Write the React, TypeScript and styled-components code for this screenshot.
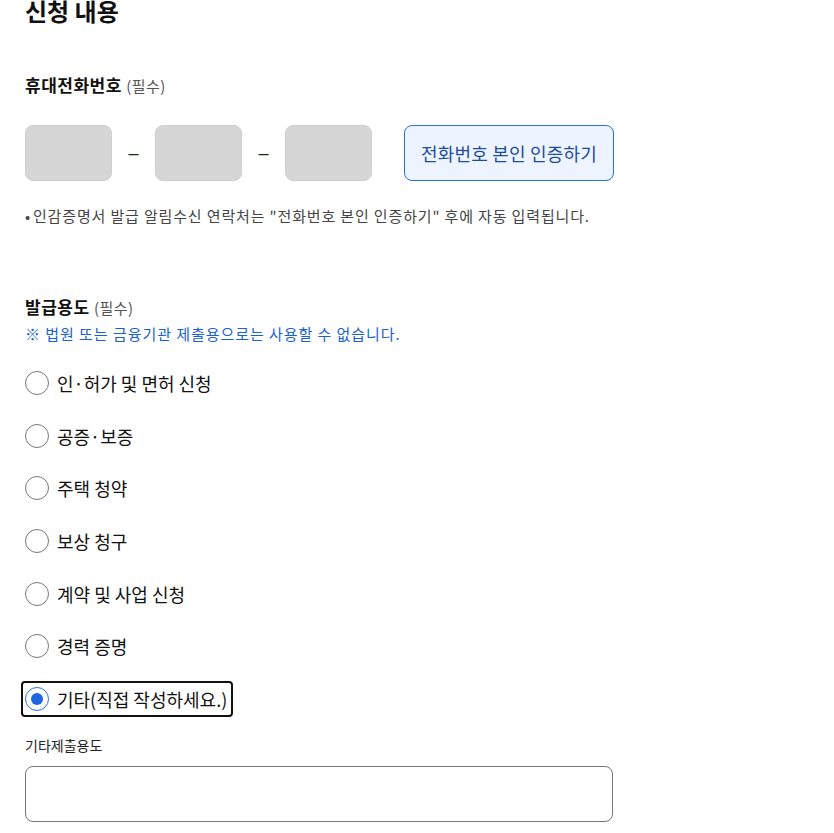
import styled, { createGlobalStyle } from "styled-components";

const GlobalStyle = createGlobalStyle`
  * { box-sizing: border-box; }
  body {
    margin: 0;
    background: #ffffff;
    font-family: "Noto Sans CJK KR", "Noto Sans", sans-serif;
    color: #111;
  }
`;

const purposes = [
  "인·허가 및 면허 신청",
  "공증·보증",
  "주택 청약",
  "보상 청구",
  "계약 및 사업 신청",
  "경력 증명",
  "기타(직접 작성하세요.)",
];

const Page = styled.div`
  padding: 0 25px;
  width: 613px;
  box-sizing: content-box;
`;

const Title = styled.h2`
  margin: -6px 0 0;
  font-size: 24px;
  font-weight: 700;
  line-height: 34px;
  color: #111;
`;

const Label = styled.h3<{ $top: number }>`
  margin: ${(p) => p.$top}px 0 0;
  font-size: 17px;
  font-weight: 700;
  line-height: 24px;
  letter-spacing: 0.5px;
  color: #111;

  span {
    font-size: 15px;
    font-weight: 400;
    color: #555;
  }
`;

const PhoneRow = styled.div`
  display: flex;
  align-items: center;
  margin-top: 27px;
`;

const PhoneInput = styled.div`
  width: 87px;
  height: 56px;
  border: 1px solid #cfcfcf;
  border-radius: 8px;
  background: #d6d6d6;
`;

const Dash = styled.span`
  width: 43px;
  text-align: center;
  font-family: "Liberation Sans", sans-serif;
  font-size: 18px;
  color: #222;
`;

const VerifyButton = styled.button`
  margin-left: 32px;
  width: 210px;
  height: 56px;
  border: 1px solid #2b6fe0;
  border-radius: 8px;
  background: #eef4ff;
  color: #1d4c9b;
  font-family: inherit;
  font-size: 18px;
  letter-spacing: 0.2px;
  cursor: pointer;
`;

const Note = styled.p`
  margin: 24px 0 0;
  font-size: 15px;
  line-height: 22px;
  letter-spacing: 0.85px;
  color: #444;

  &::before {
    content: "•";
    margin-right: 2px;
  }
`;

const Warning = styled.p`
  margin: 3px 0 0;
  font-size: 15px;
  line-height: 22px;
  letter-spacing: 0.95px;
  color: #1a5fd0;
`;

const RadioList = styled.div`
  display: flex;
  flex-direction: column;
  gap: 16.7px;
  margin-top: 20px;
`;

const RadioItem = styled.label<{ $focused?: boolean }>`
  display: inline-flex;
  align-self: flex-start;
  align-items: center;
  gap: 8px;
  height: 36px;
  margin-left: -4px;
  padding: 0 4px;
  border: 2px solid ${(p) => (p.$focused ? "#111" : "transparent")};
  border-radius: 4px;
  font-size: 18px;
  color: #111;
`;

const Circle = styled.span<{ $checked?: boolean }>`
  position: relative;
  flex: none;
  width: 24px;
  height: 24px;
  margin-left: -2px;
  border-radius: 50%;
  border: 1px solid ${(p) => (p.$checked ? "#2b6fe0" : "#777")};
  background: #fff;

  &::after {
    content: "";
    display: ${(p) => (p.$checked ? "block" : "none")};
    position: absolute;
    inset: 5px;
    border-radius: 50%;
    background: #1f66e0;
  }
`;

const FieldLabel = styled.div`
  margin-top: 18px;
  font-size: 14px;
  line-height: 20px;
  color: #222;
`;

const TextArea = styled.textarea`
  display: block;
  margin-top: 11px;
  width: 588px;
  height: 56px;
  border: 1px solid #777;
  border-radius: 8px;
  resize: none;
  font-family: inherit;
`;

export default function App() {
  return (
    <>
      <GlobalStyle />
      <Page>
        <Title>신청 내용</Title>
        <Label $top={45}>
          휴대전화번호 <span>(필수)</span>
        </Label>
        <PhoneRow>
          <PhoneInput />
          <Dash>–</Dash>
          <PhoneInput />
          <Dash>–</Dash>
          <PhoneInput />
          <VerifyButton>전화번호 본인 인증하기</VerifyButton>
        </PhoneRow>
        <Note>인감증명서 발급 알림수신 연락처는 "전화번호 본인 인증하기" 후에 자동 입력됩니다.</Note>
        <Label $top={68}>
          발급용도 <span>(필수)</span>
        </Label>
        <Warning>※ 법원 또는 금융기관 제출용으로는 사용할 수 없습니다.</Warning>
        <RadioList>
          {purposes.map((text, i) => {
            const checked = i === purposes.length - 1;
            return (
              <RadioItem key={text} $focused={checked}>
                <Circle $checked={checked} />
                {text}
              </RadioItem>
            );
          })}
        </RadioList>
        <FieldLabel>기타제출용도</FieldLabel>
        <TextArea />
      </Page>
    </>
  );
}
